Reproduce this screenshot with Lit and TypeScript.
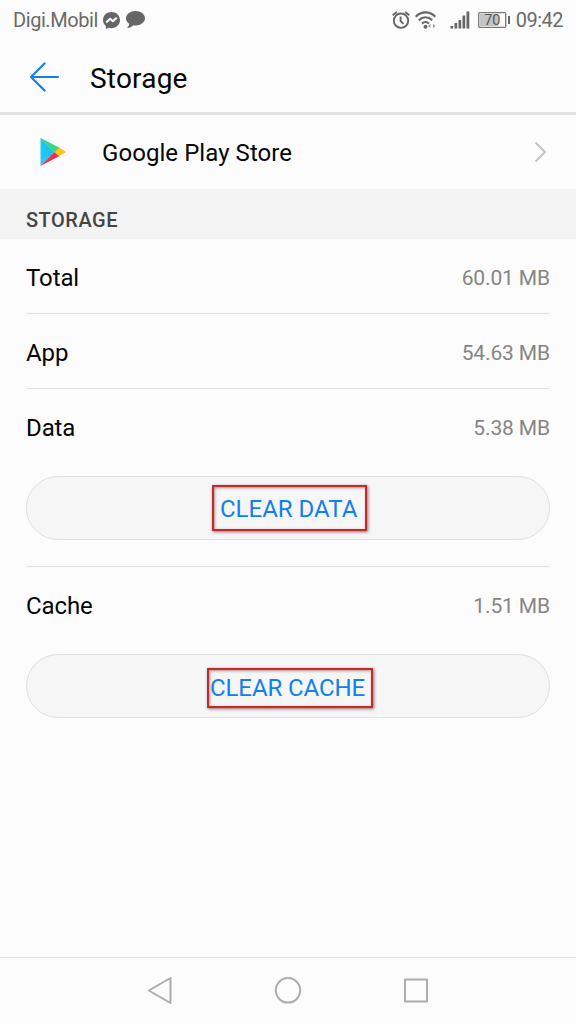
import { LitElement, html, css, svg } from "lit";
import { customElement } from "lit/decorators.js";

const messenger = svg`<path fill="#666" d="M8 0C3.500 0 0 3.300 0 7.600c0 2.300 1 4.300 2.700 5.700v2.700l2.600-1.200c.8.300 1.700.4 2.700.4 4.500 0 8-3.300 8-7.600S12.500 0 8 0z"/><path fill="none" stroke="#fcfcfc" stroke-width="1.900" stroke-linejoin="round" d="M3 9.800 6.700 6.300 9.300 8.600 13 5.500"/>`;

@customElement("app-root")
export class AppRoot extends LitElement {
  static styles = css`
    :host {
      display: flex;
      flex-direction: column;
      height: 1024px;
      width: 576px;
      background: #fcfcfc;
      color: #050505;
      font-family: Roboto, "Liberation Sans", sans-serif;
      overflow: hidden;
    }
    * { box-sizing: border-box; }
    svg { display: block; flex: none; }
    .status {
      display: flex;
      align-items: center;
      height: 40px;
      padding: 0 13px;
      font-size: 20px;
      color: #6a6a6a;
    }
    .carrier { margin-right: 5px; letter-spacing: -0.43px; }
    .grow { flex: 1; }
    .chat { margin-left: 6px; }
    .wifi { margin-left: 5px; }
    .signal { margin-left: 14px; }
    .battery { margin-left: 8px; }
    .clock { margin-left: 6px; letter-spacing: -0.5px; }
    .header {
      display: flex;
      align-items: center;
      height: 75px;
      padding-left: 29px;
      border-bottom: 3px solid #e2e2e2;
      font-size: 28px;
    }
    .arrow { margin-top: 2px; }
    .title { margin: 4px 0 0 30px; letter-spacing: 0.2px; }
    .app {
      display: flex;
      align-items: center;
      height: 74px;
      padding: 0 28px 0 39px;
      font-size: 24px;
    }
    .name { flex: 1; margin: 2px 0 0 35px; letter-spacing: 0.06px; }
    .section {
      height: 50px;
      padding: 6px 26px 0;
      line-height: 50px;
      background: #f3f3f3;
      color: #444;
      font-size: 20px;
      font-weight: 500;
      letter-spacing: 0.5px;
    }
    .list { flex: 1; padding: 0 26px; }
    .row {
      display: flex;
      align-items: center;
      justify-content: space-between;
      height: 75px;
      padding-top: 4px;
      font-size: 24px;
      letter-spacing: -0.1px;
      border-bottom: 1px solid #e0e0e0;
    }
    .bare { border-bottom: 0; padding-top: 2px; }
    .value { color: #858585; font-size: 21px; letter-spacing: -0.13px; }
    .action {
      display: flex;
      justify-content: center;
      align-items: center;
      width: 100%;
      height: 64px;
      margin-top: 12px;
      border: 1px solid #dfdfdf;
      border-radius: 32px;
      background: #f6f6f6;
      color: #1280ec;
      font: 24px Roboto, "Liberation Sans", sans-serif;
      padding: 0;
    }
    .mark {
      display: flex;
      align-items: center;
      border: 2px solid #c9282b;
      box-shadow: 1px 1px 3px rgba(60, 0, 0, 0.55), inset 1px 1px 3px rgba(60, 0, 0, 0.4);
      white-space: nowrap;
    }
    .data { width: 155px; height: 46px; padding: 2px 0 0 6px; margin-left: 3px; }
    .cache { width: 166px; height: 40px; padding-left: 1px; margin: 3px 0 0 4px; letter-spacing: -0.1px; }
    .rule { height: 1px; margin-top: 26px; background: #e0e0e0; }
    .nav {
      display: flex;
      justify-content: center;
      gap: 100px;
      height: 67px;
      padding-top: 18px;
      border-top: 1px solid #dedede;
    }
  `;

  row(label: string, value: string, bare = false) {
    return html`<div class="row ${bare ? "bare" : ""}"><span>${label}</span><span class="value">${value}</span></div>`;
  }

  render() {
    return html`
      <div class="status">
        <span class="carrier">Digi.Mobil</span>
        <svg width="17" height="17" viewBox="0 0 16 16">${messenger}</svg>
        <svg class="chat" width="19" height="18" viewBox="0 0 19 18"><path fill="#666" d="M9.500 0C4.200 0 0 3.200 0 7.200c0 2.300 1.300 4.300 3.300 5.600-.2 1.500-.9 2.900-2.200 4 2.500 0 4.700-.9 6.200-2.600.7.100 1.400.2 2.200.2 5.300 0 9.500-3.200 9.500-7.200S14.800 0 9.500 0z"/></svg>
        <span class="grow"></span>
        <svg width="18" height="18" viewBox="0 0 18 18" fill="none" stroke="#666" stroke-width="1.900"><circle cx="9" cy="9.700" r="7.200"/><path d="M8.600 5.500v4.500l2.800 2.800M.7 4.200 4.800.9M17.300 4.200 13.200.9"/></svg>
        <svg class="wifi" width="21" height="18" viewBox="0 0 21 18" fill="none" stroke="#666" stroke-width="2.100"><path d="M.7 5.700C6-.1 15-.1 20.300 5.700M3.800 9.300c4-4 9.400-4 13.400 0M7 12.600c2.200-2 4.800-2 7 0"/><circle cx="10.500" cy="15.700" r="2" fill="#666" stroke="none"/><path fill="#999" stroke="none" d="m13 15 2.500-2v4zM20.500 15 18 13v4z"/></svg>
        <svg class="signal" width="20" height="18" viewBox="0 0 20 18" fill="#666"><path d="M.5 15h2.700v2.500H.5zM4.500 12h2.700v5.500H4.500zM8.500 9h2.700v8.500H8.500zM12.500 4.500h2.700v13h-2.700zM16.500 .5h2.800v17h-2.800z"/></svg>
        <svg class="battery" width="32" height="16" viewBox="0 0 32 16"><path fill="#c4c4c4" d="M2 2h18v12H2z"/><rect x=".7" y=".7" width="27" height="14.600" rx="1" fill="none" stroke="#777" stroke-width="1.300"/><path fill="#666" d="M30 4h2v8h-2z"/><text x="14.300" y="13" text-anchor="middle" font-size="14.500" fill="#555" font-family="Roboto, sans-serif">70</text></svg>
        <span class="clock">09:42</span>
      </div>
      <div class="header">
        <svg class="arrow" width="31" height="30" viewBox="0 0 31 30" fill="none" stroke="#1280ec" stroke-width="2.200" stroke-linecap="round" stroke-linejoin="round"><path d="M15.500 1.500 2 15l13.500 13.500M2 15h27"/></svg>
        <span class="title">Storage</span>
      </div>
      <div class="app">
        <svg width="28" height="30" viewBox="0 0 28 30"><defs><linearGradient id="sky" x1="1" y1="0" x2="0" y2="1"><stop offset="0" stop-color="#15b8ea"/><stop offset="1" stop-color="#28d0f7"/></linearGradient></defs><path fill="url(#sky)" d="M1.500 1v28l13.800-14z"/><path fill="#2ddb7c" d="M1.500 1 21 11l-5 5z"/><path fill="#e4344f" d="M1.500 29 15.500 15 20.500 19z"/><path fill="#fcc419" d="m15.500 15 4.800-4.400L27 15l-7 4.300z"/></svg>
        <span class="name">Google Play Store</span>
        <svg width="14" height="22" viewBox="0 0 14 22" fill="none" stroke="#c3c3c3" stroke-width="2"><path d="m1.500 1.500 9.500 9.500-9.500 9.500"/></svg>
      </div>
      <div class="section">STORAGE</div>
      <div class="list">
        ${this.row("Total", "60.01 MB")}
        ${this.row("App", "54.63 MB")}
        ${this.row("Data", "5.38 MB", true)}
        <button class="action"><span class="mark data">CLEAR DATA</span></button>
        <div class="rule"></div>
        ${this.row("Cache", "1.51 MB", true)}
        <button class="action"><span class="mark cache">CLEAR CACHE</span></button>
      </div>
      <div class="nav">
        <svg width="28" height="28" viewBox="0 0 28 28" fill="none" stroke="#acacac" stroke-width="2" stroke-linejoin="round"><path d="M2.800 14.500 24.500 2v25z"/></svg>
        <svg width="28" height="28" viewBox="0 0 28 28" fill="none" stroke="#acacac" stroke-width="2"><circle cx="14" cy="14.300" r="12.200"/></svg>
        <svg width="28" height="28" viewBox="0 0 28 28" fill="none" stroke="#acacac" stroke-width="2" stroke-linejoin="round"><path d="M3 3.500h22v22H3z"/></svg>
      </div>
    `;
  }
}
